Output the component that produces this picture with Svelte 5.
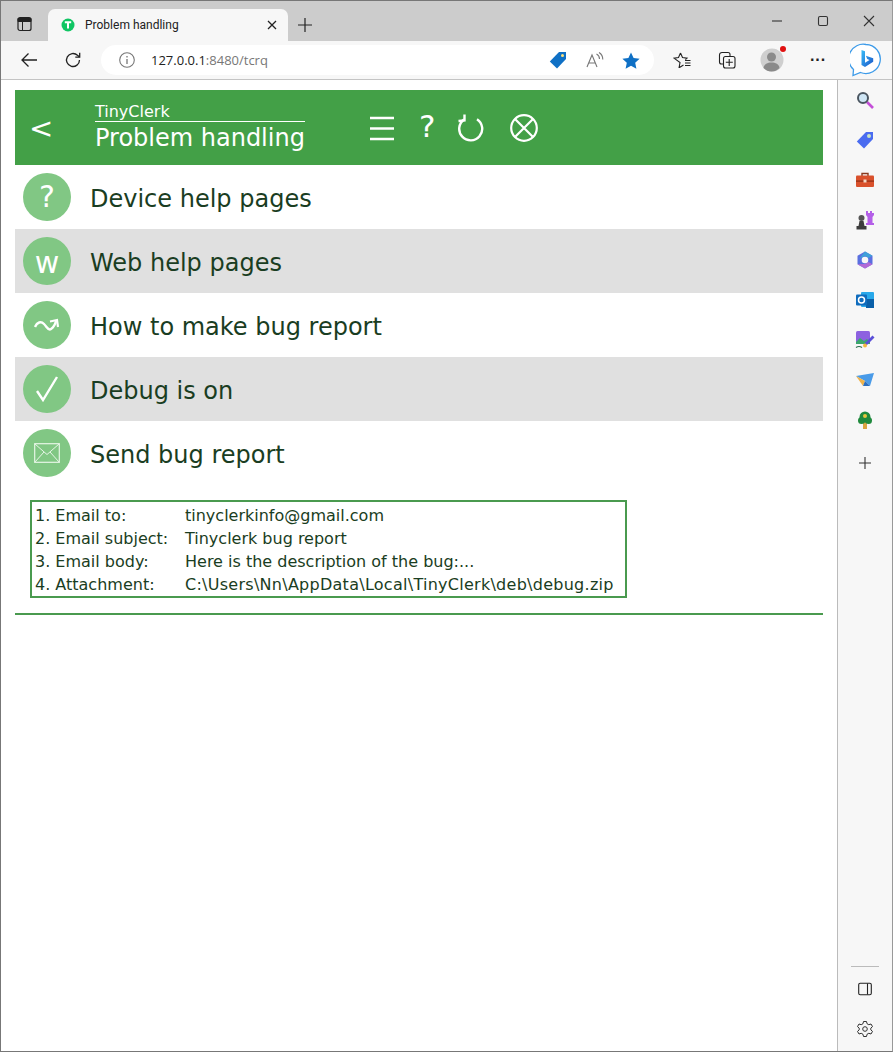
<script>
  const rows = [
    { label: 'Device help pages', glyph: '?', kind: 'text' },
    { label: 'Web help pages', glyph: 'w', kind: 'text' },
    { label: 'How to make bug report', kind: 'wave' },
    { label: 'Debug is on', kind: 'check' },
    { label: 'Send bug report', kind: 'mail' }
  ];

  const steps = [
    ['1. Email to:', 'tinyclerkinfo@gmail.com'],
    ['2. Email subject:', 'Tinyclerk bug report'],
    ['3. Email body:', 'Here is the description of the bug:...'],
    ['4. Attachment:', 'C:\\Users\\Nn\\AppData\\Local\\TinyClerk\\deb\\debug.zip', true]
  ];
</script>

<div class="window">
  <!-- browser tab strip -->
  <div class="tabstrip">
    <svg class="tabs-btn" width="16" height="16" viewBox="0 0 16 16">
      <rect x="1" y="1.5" width="13" height="13" rx="2" fill="none" stroke="#222" stroke-width="1.2" />
      <path d="M1 2.5h13v3H1zM5.5 5v9" fill="#222" stroke="#222" stroke-width="1" />
    </svg>
    <div class="tab">
      <svg width="14" height="14" viewBox="0 0 14 14">
        <circle cx="7" cy="7" r="6.500" fill="#0fc563" />
        <path d="M3.800 4.300h6.400M7 4.300v6.200" stroke="#fff" stroke-width="2" fill="none" />
      </svg>
      <span class="tab-title">Problem handling</span>
      <svg class="tab-close" width="10" height="10" viewBox="0 0 10 10">
        <path d="M1 1l8 8M9 1l-8 8" stroke="#222" stroke-width="1.300" />
      </svg>
    </div>
    <svg class="new-tab" width="16" height="16" viewBox="0 0 16 16">
      <path d="M8 1v14M1 8h14" stroke="#222" stroke-width="1.200" />
    </svg>
    <div class="winbtns">
      <svg width="12" height="12" viewBox="0 0 12 12"><path d="M1 6h10" stroke="#333" stroke-width="1.100" /></svg>
      <svg width="12" height="12" viewBox="0 0 12 12"><rect x="1.500" y="1.500" width="9" height="9" rx="1.500" fill="none" stroke="#333" stroke-width="1.100" /></svg>
      <svg width="12" height="12" viewBox="0 0 12 12"><path d="M1 1l10 10M11 1L1 11" stroke="#333" stroke-width="1.100" /></svg>
    </div>
  </div>

  <!-- address bar row -->
  <div class="toolbar">
    <svg class="tool-back" width="18" height="16" viewBox="0 0 18 16">
      <path d="M17 8H2M8.500 1.500L2 8l6.500 6.500" fill="none" stroke="#222" stroke-width="1.300" />
    </svg>
    <svg class="tool-reload" width="18" height="18" viewBox="0 0 18 18">
      <path d="M15.500 9a6.500 6.500 0 1 1-2-4.700L15.500 6" fill="none" stroke="#222" stroke-width="1.300" />
      <path d="M15.700 1.800V6.200H11.300" fill="none" stroke="#222" stroke-width="1.300" />
    </svg>
    <div class="address">
      <svg width="16" height="16" viewBox="0 0 16 16">
        <circle cx="8" cy="8" r="7.300" fill="none" stroke="#777" stroke-width="1.100" />
        <path d="M8 7v5M8 4v1.600" stroke="#777" stroke-width="1.300" />
      </svg>
      <span class="url">127.0.0.1<span class="url-dim">:8480/tcrq</span></span>
      <svg class="addr-tag" width="18" height="18" viewBox="0 0 18 18">
        <path d="M10 1h7v7l-9 9.500L.8 10.500z" fill="#0f70c5" />
        <circle cx="13.500" cy="4.500" r="1.500" fill="#ffe27a" />
      </svg>
      <svg class="addr-read" width="18" height="16" viewBox="0 0 18 16">
        <path d="M1 15L6 3l5 12M2.800 11h6.500" fill="none" stroke="#777" stroke-width="1.100" />
        <path d="M10.500 2q3 1.500 3 5M13 .5q3.800 2.200 3.800 7" fill="none" stroke="#777" stroke-width="1.100" />
      </svg>
      <svg class="addr-star" width="18" height="17" viewBox="0 0 18 17">
        <path d="M9 .5l2.600 5.500 6 .7-4.400 4.100 1.200 6L9 13.800l-5.400 3 1.200-6L.4 6.700l6-.7z" fill="#0f70c5" />
      </svg>
    </div>
    <svg class="tool-fav" width="18" height="17" viewBox="0 0 18 17">
      <path d="M7.500 1l2 4.500 4.500.6-1.600 1.500M6 16l1-5.500L1 6.100l4.500-.6 2-4.500M6.500 15.500l4-2.500" fill="none" stroke="#222" stroke-width="1.100" />
      <path d="M12 8.500h5.500M12 11h5.500M12 13.500h5.500" stroke="#222" stroke-width="1.100" />
    </svg>
    <svg class="tool-coll" width="18" height="18" viewBox="0 0 18 18">
      <path d="M5 13H3.500a2 2 0 0 1-2-2V4a2.500 2.500 0 0 1 2.500-2.500h6a2 2 0 0 1 2 2V5" fill="none" stroke="#222" stroke-width="1.100" />
      <rect x="5.500" y="5.500" width="11.500" height="11.500" rx="2" fill="none" stroke="#222" stroke-width="1.100" />
      <path d="M11.200 8v7M7.800 11.300h7" stroke="#222" stroke-width="1.100" />
    </svg>
    <div class="avatar">
      <svg width="24" height="24" viewBox="0 0 24 24">
        <circle cx="12" cy="12" r="11.500" fill="#cfcfcf" />
        <circle cx="11.500" cy="9" r="4.500" fill="#8a8a8a" />
        <path d="M3.500 20c.5-4 4-5.500 8-5.500s7.500 1.500 8 5.500q-3.500 3.500-8 3.500t-8-3.500z" fill="#8a8a8a" />
      </svg>
      <span class="avatar-dot"></span>
    </div>
    <span class="more">···</span>
    <svg class="bing" width="32" height="34" viewBox="0 0 32 34">
      <defs>
        <linearGradient id="bing-b" x1="0" y1="0" x2="1" y2="1">
          <stop offset="0" stop-color="#37bdf8" />
          <stop offset="1" stop-color="#1b55c8" />
        </linearGradient>
      </defs>
      <path d="M16 1.500a14.500 14.500 0 1 1-5.500 28L3 32.500l.5-6A14.500 14.500 0 0 1 16 1.500z" fill="#fff" stroke="#3d9be9" stroke-width="1.300" />
      <path d="M11.500 7l3.500 1.300v11.500l4.500-2.700-2.300-1-1.300-3.400 7.300 2.500v3.500L15 24l-3.500-2z" fill="url(#bing-b)" />
    </svg>
  </div>

  <div class="body">
    <main class="page">
      <header class="appbar">
        <span class="back">&lt;</span>
        <div class="titles">
          <div class="app-name">TinyClerk</div>
          <div class="page-name">Problem handling</div>
        </div>
        <div class="actions">
          <svg width="26" height="26" viewBox="0 0 26 26">
            <path d="M1 3h24M1 13.500h24M1 24h24" stroke="#fff" stroke-width="2.600" />
          </svg>
          <span class="action-q">?</span>
          <svg class="action-reload" width="26" height="28" viewBox="0 0 26 28">
            <path d="M6 5.500a11.500 11.500 0 1 0 13-.3" fill="none" stroke="#fff" stroke-width="2.400" />
            <path d="M6.500 .5l0 6-6 .5" fill="none" stroke="#fff" stroke-width="2.400" />
          </svg>
          <svg class="action-close" width="28" height="28" viewBox="0 0 28 28">
            <circle cx="14" cy="14" r="12.800" fill="none" stroke="#fff" stroke-width="2.200" />
            <path d="M5 5l18 18M23 5L5 23" stroke="#fff" stroke-width="2.200" />
          </svg>
        </div>
      </header>

      {#each rows as row, i}
        <div class="row" class:shaded={i % 2 === 1}>
          <div class="badge">
            {#if row.kind === 'text'}
              <span class="badge-glyph" class:low={row.glyph === 'w'}>{row.glyph}</span>
            {:else if row.kind === 'wave'}
              <svg width="26" height="14" viewBox="0 0 26 14">
                <path d="M1 9C3 4 7 3 10 6S14 13 17 11S21 7 22 3" fill="none" stroke="#fff" stroke-width="2.400" />
                <path d="M16 3.500L23 2L24 9" fill="none" stroke="#fff" stroke-width="2.200" />
              </svg>
            {:else if row.kind === 'check'}
              <svg width="24" height="26" viewBox="0 0 24 26">
                <path d="M2 15l6 9L22 1" fill="none" stroke="#fff" stroke-width="2.400" />
              </svg>
            {:else}
              <svg width="26" height="20" viewBox="0 0 26 20">
                <rect x=".7" y=".7" width="24.600" height="18.600" fill="none" stroke="#e6f5e6" stroke-width="1.200" />
                <path d="M1 1l12 10.500L25 1M1 19l9-10M25 19l-9-10" fill="none" stroke="#e6f5e6" stroke-width="1" />
              </svg>
            {/if}
          </div>
          <span class="row-label">{row.label}</span>
        </div>
      {/each}

      <div class="steps">
        {#each steps as [name, value, wide]}
          <div class="step"><span class="step-name">{name}</span><span class:wide>{value}</span></div>
        {/each}
      </div>
      <hr class="rule" />
    </main>

    <!-- edge sidebar -->
    <aside class="sidebar">
      <div class="side-icon">
        <svg width="18" height="18" viewBox="0 0 18 18">
          <path d="M11 11l6 6" stroke="#c44fd8" stroke-width="2.600" />
          <circle cx="7" cy="7" r="5" fill="#cfe6f5" stroke="#4a5560" stroke-width="2" />
        </svg>
      </div>
      <div class="side-icon">
        <svg width="18" height="18" viewBox="0 0 18 18">
          <path d="M10 1h7v7l-9 9.500L.8 10.500z" fill="#4a6cf0" />
          <circle cx="13" cy="5" r="2" fill="#c9e6c5" />
        </svg>
      </div>
      <div class="side-icon">
        <svg width="18" height="18" viewBox="0 0 18 18">
          <path d="M6 5V2.500h6V5" fill="none" stroke="#8a3a1f" stroke-width="1.400" />
          <rect y="4.500" width="18" height="11.500" rx="1" fill="#d9512c" />
          <rect y="9.500" width="18" height="1.200" fill="#8f3016" />
          <rect x="7.500" y="8.500" width="3" height="3" fill="#f3d9c6" />
        </svg>
      </div>
      <div class="side-icon">
        <svg width="20" height="20" viewBox="0 0 20 20">
          <path d="M11 1h2v2h2V1h2v2h2v2l-1.500 2v6H19v2h-8v-2h1.500V7L11 5z" fill="#b45fe8" />
          <circle cx="6.500" cy="8" r="3" fill="#555" />
          <path d="M4.500 11h4l1 5h-6zM1.500 16h10V19.500h-10z" fill="#3d3d3d" />
        </svg>
      </div>
      <div class="side-icon">
        <svg width="18" height="18" viewBox="0 0 18 18">
          <path d="M9 .5l7.500 4.300v8.400L9 17.500 1.500 13.200V4.800z" fill="#5a6fe0" />
          <path d="M9 .5l7.500 4.300-4 2.200L9 5 3 8z" fill="#3fa0d8" />
          <path d="M1.500 13.200L9 17.500l7.500-4.300-4-2.200-3.500 2z" fill="#b26ad6" />
          <circle cx="9" cy="9" r="3.300" fill="#f7f7f7" />
        </svg>
      </div>
      <div class="side-icon">
        <svg width="18" height="18" viewBox="0 0 18 18">
          <rect x="5" y="1" width="13" height="15" rx="1" fill="#28a8ea" />
          <rect x="10" y="8" width="8" height="9" fill="#0a5fa8" />
          <rect y="3.500" width="11" height="11" rx="1" fill="#0f6cbd" />
          <circle cx="5.500" cy="9" r="3" fill="none" stroke="#fff" stroke-width="1.500" />
        </svg>
      </div>
      <div class="side-icon">
        <svg width="20" height="20" viewBox="0 0 20 20">
          <rect x="1" y="1" width="14" height="13" rx="1.500" fill="#8d62e0" />
          <path d="M1 12l4-4 4 3 3-2 3 3v2H1z" fill="#3aa76d" />
          <path d="M9.500 13.500L17.500 5.500 19.500 7.500 11.500 15.500z" fill="#5a4fd8" />
          <circle cx="10" cy="15.500" r="2" fill="#f3b93f" />
          <path d="M1 17.500q3-2 6 0" fill="none" stroke="#2b6e4b" stroke-width="1.200" />
        </svg>
      </div>
      <div class="side-icon">
        <svg width="18" height="14" viewBox="0 0 18 14">
          <path d="M0 3l18-3-4 13-5-5z" fill="#4a9be8" />
          <path d="M0 3l9 5-2 5z" fill="#f0b34a" />
          <path d="M7 13l2-5 5 5z" fill="#2c6fc0" />
        </svg>
      </div>
      <div class="side-icon">
        <svg width="16" height="18" viewBox="0 0 16 18">
          <rect x="6" y="11" width="4" height="7" fill="#d9a441" />
          <circle cx="8" cy="6" r="5.500" fill="#1f8a3d" />
          <circle cx="4.500" cy="9.500" r="3.500" fill="#1f8a3d" />
          <circle cx="11.500" cy="9.500" r="3.500" fill="#1f8a3d" />
          <circle cx="8" cy="5" r="2" fill="#e6c53f" />
        </svg>
      </div>
      <div class="side-icon side-add">
        <svg width="14" height="14" viewBox="0 0 14 14">
          <path d="M7 1v12M1 7h12" stroke="#333" stroke-width="1.100" />
        </svg>
      </div>

      <div class="sidebar-foot">
        <div class="foot-rule"></div>
        <div class="side-icon">
          <svg width="14" height="14" viewBox="0 0 14 14">
            <rect x=".7" y="1.200" width="12.600" height="11.600" rx="1.500" fill="none" stroke="#222" stroke-width="1.100" />
            <path d="M9.500 1.500v11" stroke="#222" stroke-width="1.100" />
          </svg>
        </div>
        <div class="side-icon">
          <svg width="18" height="18" viewBox="0 0 18 18">
            <path d="M7.500 1.500h3l.5 2.200 1.800 1 2.200-.7 1.500 2.600-1.700 1.500v1.800l1.700 1.500-1.500 2.600-2.200-.7-1.800 1-.5 2.200h-3L7 14.300l-1.800-1-2.200.7-1.500-2.600 1.700-1.500V8.100L1.500 6.600 3 4l2.200.7 1.800-1z" fill="none" stroke="#333" stroke-width="1" />
            <circle cx="9" cy="9" r="2.300" fill="none" stroke="#333" stroke-width="1" />
          </svg>
        </div>
      </div>
    </aside>
  </div>
</div>

<style>
  :global(body) {
    margin: 0;
    background: #fff;
  }

  .window {
    width: 893px;
    height: 1052px;
    box-sizing: border-box;
    border: 1px solid #777;
    border-right-color: #999;
    display: flex;
    flex-direction: column;
    overflow: hidden;
    font-family: "DejaVu Sans", Verdana, sans-serif;
  }

  .tabstrip {
    height: 40px;
    flex: none;
    background: #cccccc;
    display: flex;
    align-items: flex-end;
    position: relative;
  }

  .tabs-btn {
    margin: 0 0 9px 16px;
  }

  .tab {
    width: 240px;
    height: 32px;
    margin-left: 15px;
    box-sizing: border-box;
    padding: 0 10px 0 13px;
    background: #f7f7f7;
    border-radius: 7px 7px 0 0;
    display: flex;
    align-items: center;
  }

  .tab-title {
    margin-left: 10px;
    font: 12px Roboto, sans-serif;
    color: #222;
    flex: 1;
  }

  .tab-close {
    margin-right: 1px;
  }

  .new-tab {
    margin: 0 0 8px 9px;
  }

  .winbtns {
    margin: 0 0 14px auto;
    padding-right: 17px;
    display: flex;
    gap: 34px;
  }

  .toolbar {
    height: 39px;
    flex: none;
    box-sizing: border-box;
    background: #f7f7f7;
    border-bottom: 1px solid #c4c4c4;
    display: flex;
    align-items: center;
    position: relative;
  }

  .tool-back {
    margin-left: 19px;
  }

  .tool-reload {
    margin-left: 26px;
  }

  .address {
    width: 553px;
    height: 30px;
    margin-left: 19px;
    box-sizing: border-box;
    padding-left: 18px;
    background: #fff;
    border-radius: 15px;
    display: flex;
    align-items: center;
  }

  .url {
    margin-left: 16px;
    font: 13px "Open Sans", sans-serif;
    color: #222;
  }

  .url-dim {
    color: #777;
  }

  .addr-tag {
    margin-left: auto;
  }

  .addr-read {
    margin-left: 19px;
  }

  .addr-star {
    margin: 0 14px 0 18px;
  }

  .tool-fav {
    margin-left: 19px;
  }

  .tool-coll {
    margin-left: 27px;
  }

  .avatar {
    margin-left: 24px;
    position: relative;
    height: 24px;
  }

  .avatar-dot {
    position: absolute;
    right: -2px;
    top: -2px;
    width: 6px;
    height: 6px;
    border-radius: 50%;
    background: #e01010;
  }

  .more {
    margin-left: 26px;
    width: 18px;
    font: bold 16px "Liberation Sans", sans-serif;
    color: #222;
    letter-spacing: 0;
  }

  .bing {
    margin-left: 22px;
    flex: none;
  }

  .body {
    flex: 1;
    display: flex;
    min-height: 0;
  }

  .page {
    width: 836px;
    box-sizing: border-box;
    padding: 10px 14px 0;
    background: #fff;
    color: #1a3d22;
  }

  .appbar {
    height: 75px;
    background: #43a047;
    color: #fff;
    display: flex;
    align-items: center;
  }

  .back {
    width: 80px;
    padding-left: 14px;
    box-sizing: border-box;
    font-size: 29px;
  }

  .titles {
    width: 210px;
    padding-top: 3px;
  }

  .app-name {
    font-size: 16px;
    line-height: 19px;
    border-bottom: 1px solid #fff;
    height: 20px;
    box-sizing: border-box;
    margin-top: -3px;
  }

  .page-name {
    font-size: 24px;
    line-height: 30px;
    margin-top: 1px;
  }

  .actions {
    margin-left: 64px;
    display: flex;
    align-items: center;
  }

  .action-q {
    font-size: 31px;
    margin-left: 24px;
    margin-top: -4px;
    width: 17px;
  }

  .action-reload {
    margin-left: 22px;
  }

  .action-close {
    margin-left: 26px;
  }

  .row {
    height: 64px;
    padding-left: 8px;
    display: flex;
    align-items: center;
  }

  .row.shaded {
    background: #e0e0e0;
  }

  .badge {
    width: 48px;
    height: 48px;
    border-radius: 50%;
    background: #81c784;
    color: #fff;
    display: flex;
    align-items: center;
    justify-content: center;
    flex: none;
  }

  .badge-glyph {
    font-size: 30px;
    line-height: 1;
  }

  .badge-glyph.low {
    margin-top: 4px;
  }

  .row-label {
    margin-left: 19px;
    margin-top: 4px;
    font-size: 24px;
  }

  .steps {
    width: 597px;
    height: 98px;
    box-sizing: border-box;
    margin: 15px 0 0 15px;
    padding: 2px 0 0 3px;
    border: 2px solid #4a9a4f;
    font-size: 16px;
    line-height: 23px;
  }

  .step {
    display: flex;
    white-space: nowrap;
  }

  .step-name {
    width: 150px;
    flex: none;
  }

  .wide {
    letter-spacing: 0.27px;
  }

  .rule {
    margin: 15px 0 0;
    border: 0;
    border-top: 2px solid #4a9a4f;
  }

  .sidebar {
    flex: 1;
    box-sizing: border-box;
    border-left: 1px solid #bbb;
    background: #f7f7f7;
    padding-bottom: 2px;
    display: flex;
    flex-direction: column;
    align-items: center;
  }

  .side-icon {
    height: 40px;
    flex: none;
    display: flex;
    align-items: center;
    justify-content: center;
  }

  .side-add {
    margin-top: 3px;
  }

  .sidebar-foot {
    margin-top: auto;
    display: flex;
    flex-direction: column;
    align-items: center;
  }

  .foot-rule {
    width: 28px;
    height: 1px;
    background: #bbb;
    margin-bottom: 2px;
  }
</style>
